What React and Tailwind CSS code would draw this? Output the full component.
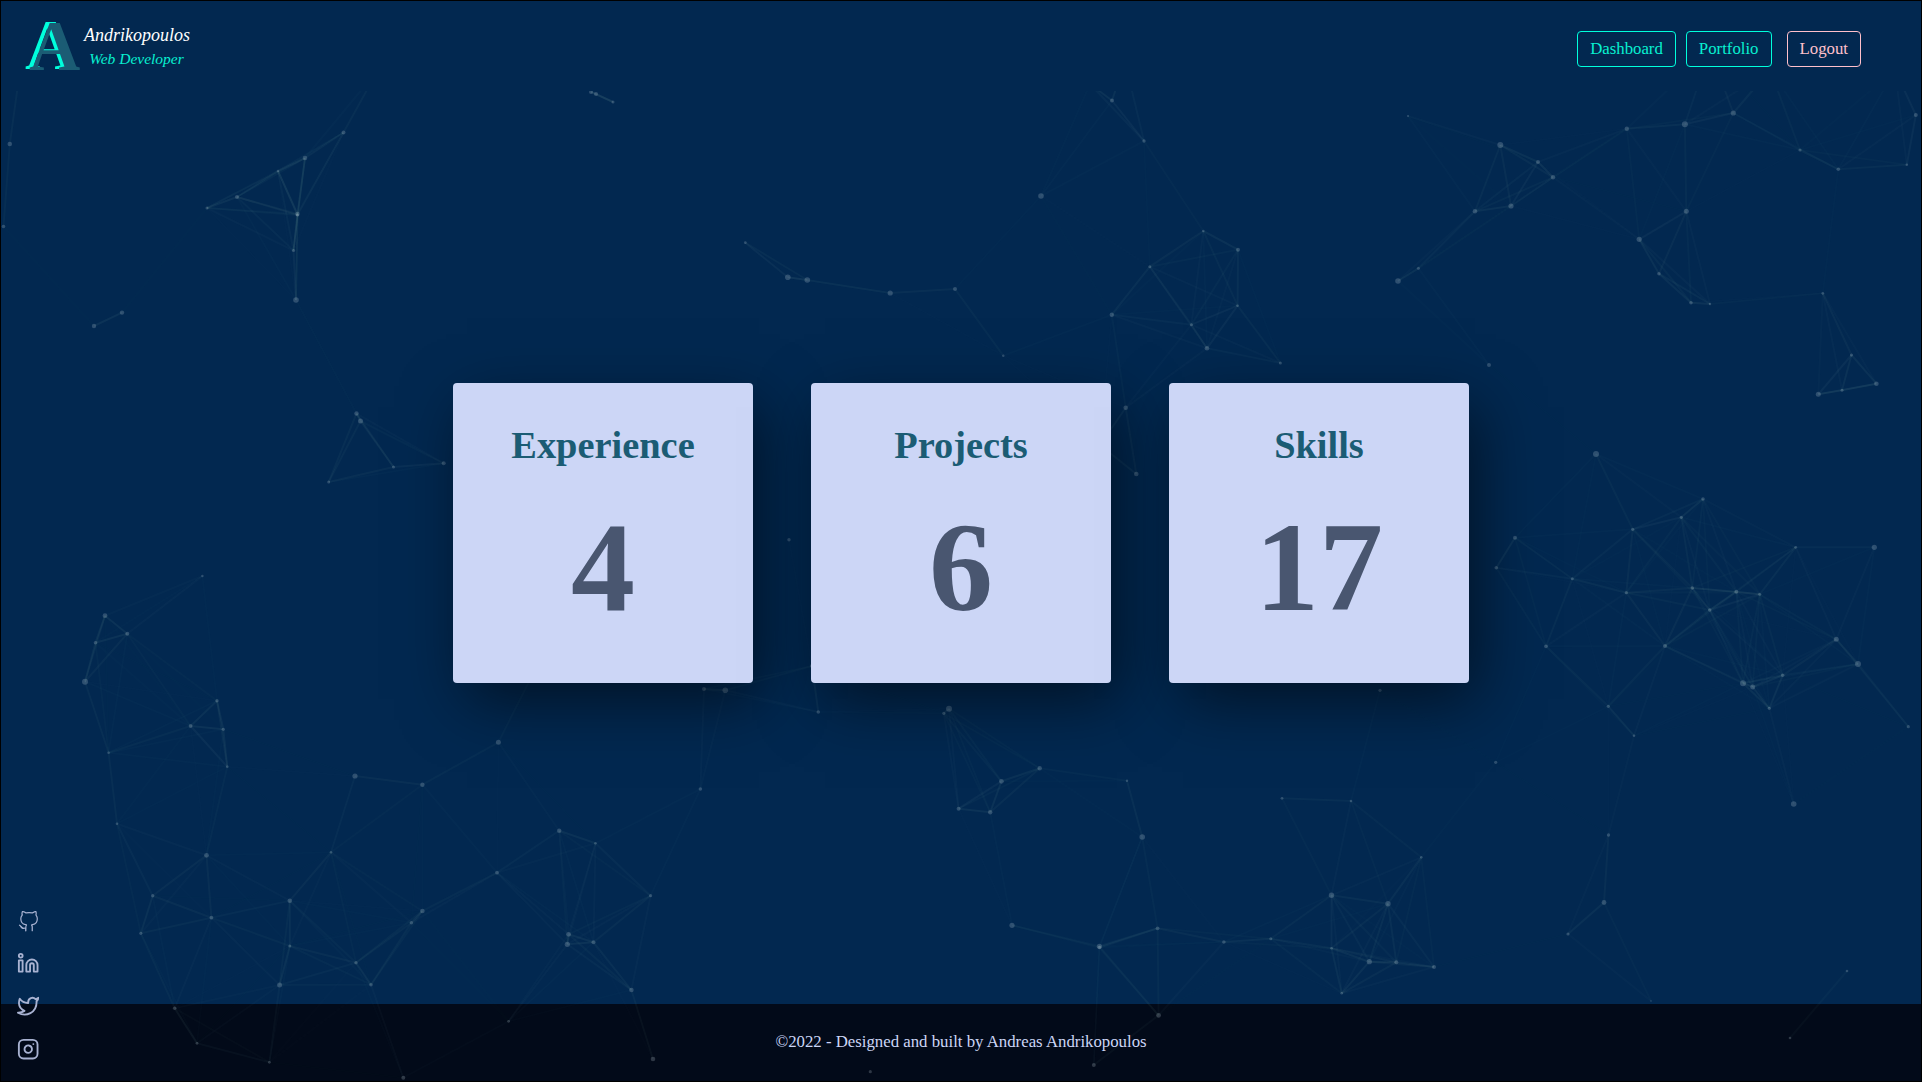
import { FiLinkedin, FiTwitter, FiInstagram } from "react-icons/fi";
import { VscGithubAlt } from "react-icons/vsc";

const NODES = [
  [207,208,1.5],[237,197,2],[278,171,1.3],[305,158,2.3],[343.5,132.5,2],[297.5,214,2.3],[297.5,215,1.6],[293.5,250.5,1.6],[296,300,2.8],
  [591,92,2],[596,94,2],[613,102,1.5],[378,70,2],[20,70,2],[1125,62,2],[1090,84,2],
  [1408,116,1.1],[1500.3,145,3],[1538,162,2],[1553,177.3,2.2],[1511,206,2.6],[1475,211.3,2.3],[1418.4,268.3,1.5],[1398,281,2.8],
  [1626.8,128.7,2.2],[1684.9,124.3,3],[1733.3,113,2.6],[1800,150,1.6],[1838.3,169.3,1.8],[1906.8,164.7,1.3],[1915.8,115,2],
  [1686.3,211.3,2.5],[1639.2,239.3,2.6],[1659,273.7,1.8],[1691,302.7,1.8],[1710,304,1.2],[1822.8,293.3,1.4],[1851.5,355,1.6],
  [1876.4,383.7,2.3],[1818.3,394.3,2.5],[1842,390.3,1.5],[1489,365,2],[1710,50,2],[1770,70,2],[1895,70,2],
  [1596,454,3],[1703,499,1.8],[1681.3,517.3,1.6],[1632.7,529.3,1.6],[1515,537.7,2],[1496.3,567.7,1.8],[1572.3,578.7,1.5],
  [1626.3,592.7,1.6],[1692.3,588,1.8],[1736.3,591.7,2],[1759.7,594.3,1.5],[1709.7,610,1.8],[1665,646,2.1],[1546,646.3,1.9],
  [1795.7,547.3,1.4],[1874.3,547.3,2.6],[1836.3,639.3,2.5],[1858,664,3],[1743,683.3,3],[1752.7,687,2.5],[1782.7,675.3,1.7],
  [1769.3,708.3,1.6],[1608.3,706.3,1.6],[1634,735.7,1.3],[1495.7,762.3,1.6],[1908.3,726.7,1.6],[1793.7,804,2.8],
  [202.4,576,1.2],[105,615.7,2.4],[127.3,633.7,2],[95.5,642.7,1.8],[85,681.7,3],[217,700.7,1.7],[190.6,726,1.9],[223.3,729.3,1.6],
  [108.6,752.7,1.3],[227.3,766.7,1.3],[355,776,2.6],[422.4,784.7,2.2],[498.4,742.3,2.5],[117,823.7,1.3],[206.5,855.3,2.4],
  [331,852.3,1.3],[152.7,895.7,1.7],[211.4,917.7,1.9],[289.8,900.7,2.3],[140.8,933.3,1.6],[289.8,946,1.5],[356,962.7,1.7],
  [279.6,985,2.5],[371,984.7,1.8],[411.4,922.7,1.8],[422.4,911,2.3],[497,872.7,1.9],[559.2,830.7,2.2],[595.5,843.3,1.3],
  [650.6,895.7,1.6],[568.6,934.3,2.4],[567.3,944.3,2.6],[593.5,942.3,2],[631.4,990,2.3],[508.6,1021.3,1.4],[653,1059,2.3],
  [174.7,1008.3,1.8],[197,1043.3,1.4],[269.4,1062.3,1.4],[403.3,1077.7,2],
  [443.7,463.3,2],[789,539.7,1.7],[704,689,2],[725.3,690.3,2.8],[818.3,712,1.8],[540,660,2],[812,666,2],
  [745.3,242.7,1.4],[787.8,277.3,2.8],[807.3,280,2.8],[890.2,293,2.6],[955,289,2],[1003.3,355.7,1.2],[1203.3,231,1.3],
  [1238,249.7,2],[1149.8,266.7,1.5],[1111.8,314.7,2.2],[1237.6,305.7,1.3],[1191.4,324.7,1.5],[1207,348.3,2.3],[1280.4,363,1.5],
  [1125.7,407.7,2.3],[1136.3,474,2.3],[1041,196,2.8],[1112,100.5,2],[1144,141,1.7],[9.8,144,2.3],[3.5,226.5,1.8],
  [94,326,2.2],[122,312.6,2.2],[356.5,413.5,2.2],[360.5,421,2.5],[393.5,467,1.5],[328.7,482,1.5],[1100,445,2],
  [1847,971,1.3],[1790,1038,1.3],[1608.5,835,1.7],[1604,902.5,2.4],[1568,934,1.6],[1651,1001,0.8],
  [700.4,789,1.8],[949,708.7,3],[943.8,713.3,1.6],[1039.7,768.3,2.2],[1001.4,781.3,2.4],[1127,780.7,1.2],[958.6,808.7,2],
  [990.2,812.3,2.2],[1142.2,837,2.8],[1012,925.3,2.6],[1099.4,946.3,2.6],[1099.4,947.5,1.8],[1157.6,928.3,1.9],[1223.9,942,1.8],
  [1270.8,938.7,1.5],[1282,798.3,1.4],[1351,801,1.3],[1421.3,857.3,1.3],[1331.5,895.3,2.7],[1388,903.7,2.7],[1331.5,948.3,1.3],
  [1369.3,961.7,2.6],[1396.3,962.3,2],[1434,967,2],[1341.7,993.3,1.3],[1158.6,1015.3,2.4],[1093.8,1065,2],[870.3,1071.7,1.6],[1380,690.3,1.6],
];

const REACH = 150;

const LINKS = NODES.flatMap(([x1, y1], i) =>
  NODES.slice(i + 1).flatMap(([x2, y2]) => {
    const d = Math.hypot(x2 - x1, y2 - y1);
    return d < REACH ? [{ x1, y1, x2, y2, o: 0.09 * (1 - d / REACH) }] : [];
  })
);

function Particles() {
  return (
    <svg className="pointer-events-none absolute -top-px -left-px h-[1082px] w-[1922px]" viewBox="0 0 1922 1082" aria-hidden="true">
      {LINKS.map((l, i) => (
        <line key={i} x1={l.x1} y1={l.y1} x2={l.x2} y2={l.y2} stroke="#96c0b4" strokeWidth="2" strokeOpacity={l.o} />
      ))}
      {NODES.map(([x, y, r], i) => (
        <circle key={i} cx={x} cy={y} r={r} fill="#cddae4" fillOpacity="0.22" />
      ))}
    </svg>
  );
}

function Header() {
  return (
    <header className="relative flex h-[90px] items-start justify-between bg-[#022850] pr-[60px] pl-[28px]">
      <a className="flex items-start" href="#home">
        <span className="mt-[6px] block h-[78px] w-[51px] text-[71px] leading-[78px] font-bold text-[#1b5c74] [text-shadow:-4px_-1px_0_#00ffdc]">
          A
        </span>
        <span className="mt-[21px] ml-[3px] flex w-[108px] flex-col items-center italic">
          <span className="text-[18px] leading-[26px] text-white">Andrikopoulos</span>
          <span className="-ml-px text-[15.5px] leading-[22px] text-[#08f0d0]">Web Developer</span>
        </span>
      </a>
      <nav className="mt-[30px] flex text-[16.8px] leading-[34px] text-[#08f0d0]">
        <a className="rounded-[4px] border border-[#00ffdc] px-3" href="#dashboard">Dashboard</a>
        <a className="ml-[10px] rounded-[4px] border border-[#00ffdc] px-3" href="#portfolio">Portfolio</a>
        <a className="ml-[15px] rounded-[4px] border border-[#ffc0cb] px-3 text-[#ffc0cb]" href="#logout">Logout</a>
      </nav>
    </header>
  );
}

function StatCard({ title, value }) {
  return (
    <section className="flex size-[300px] flex-col items-center rounded-[4px] bg-[#ccd6f6] pt-[40px] font-bold shadow-[10px_20px_60px_-4px_rgba(0,0,0,0.56)]">
      <h2 className="text-[38.4px] leading-[44px] text-[#1b5c74]">{title}</h2>
      <p className="mt-[27px] text-[128px] leading-[147px] text-[#495670]">{value}</p>
    </section>
  );
}

function Socials() {
  return (
    <div className="absolute bottom-[21px] left-[16px] flex flex-col gap-[20.3px] text-[22.4px] text-[#a8b2d1]">
      <VscGithubAlt />
      <FiLinkedin />
      <FiTwitter />
      <FiInstagram />
    </div>
  );
}

export default function App() {
  return (
    <div className="relative isolate flex h-[1082px] w-[1922px] flex-col overflow-hidden border border-black bg-[#022850] font-['Liberation_Serif',serif]">
      <div className="absolute inset-x-0 bottom-0 h-[77px] bg-[#020a19]" />
      <Particles />
      <Header />
      <main className="relative flex flex-1 items-start justify-center gap-[58px] pt-[292px]">
        <StatCard title="Experience" value="4" />
        <StatCard title="Projects" value="6" />
        <StatCard title="Skills" value="17" />
      </main>
      <footer className="relative flex h-[77px] items-center justify-center pb-[2px] text-[16.8px] text-[#ccd6f6]">
        ©2022 - Designed and built by Andreas Andrikopoulos
      </footer>
      <Socials />
    </div>
  );
}
